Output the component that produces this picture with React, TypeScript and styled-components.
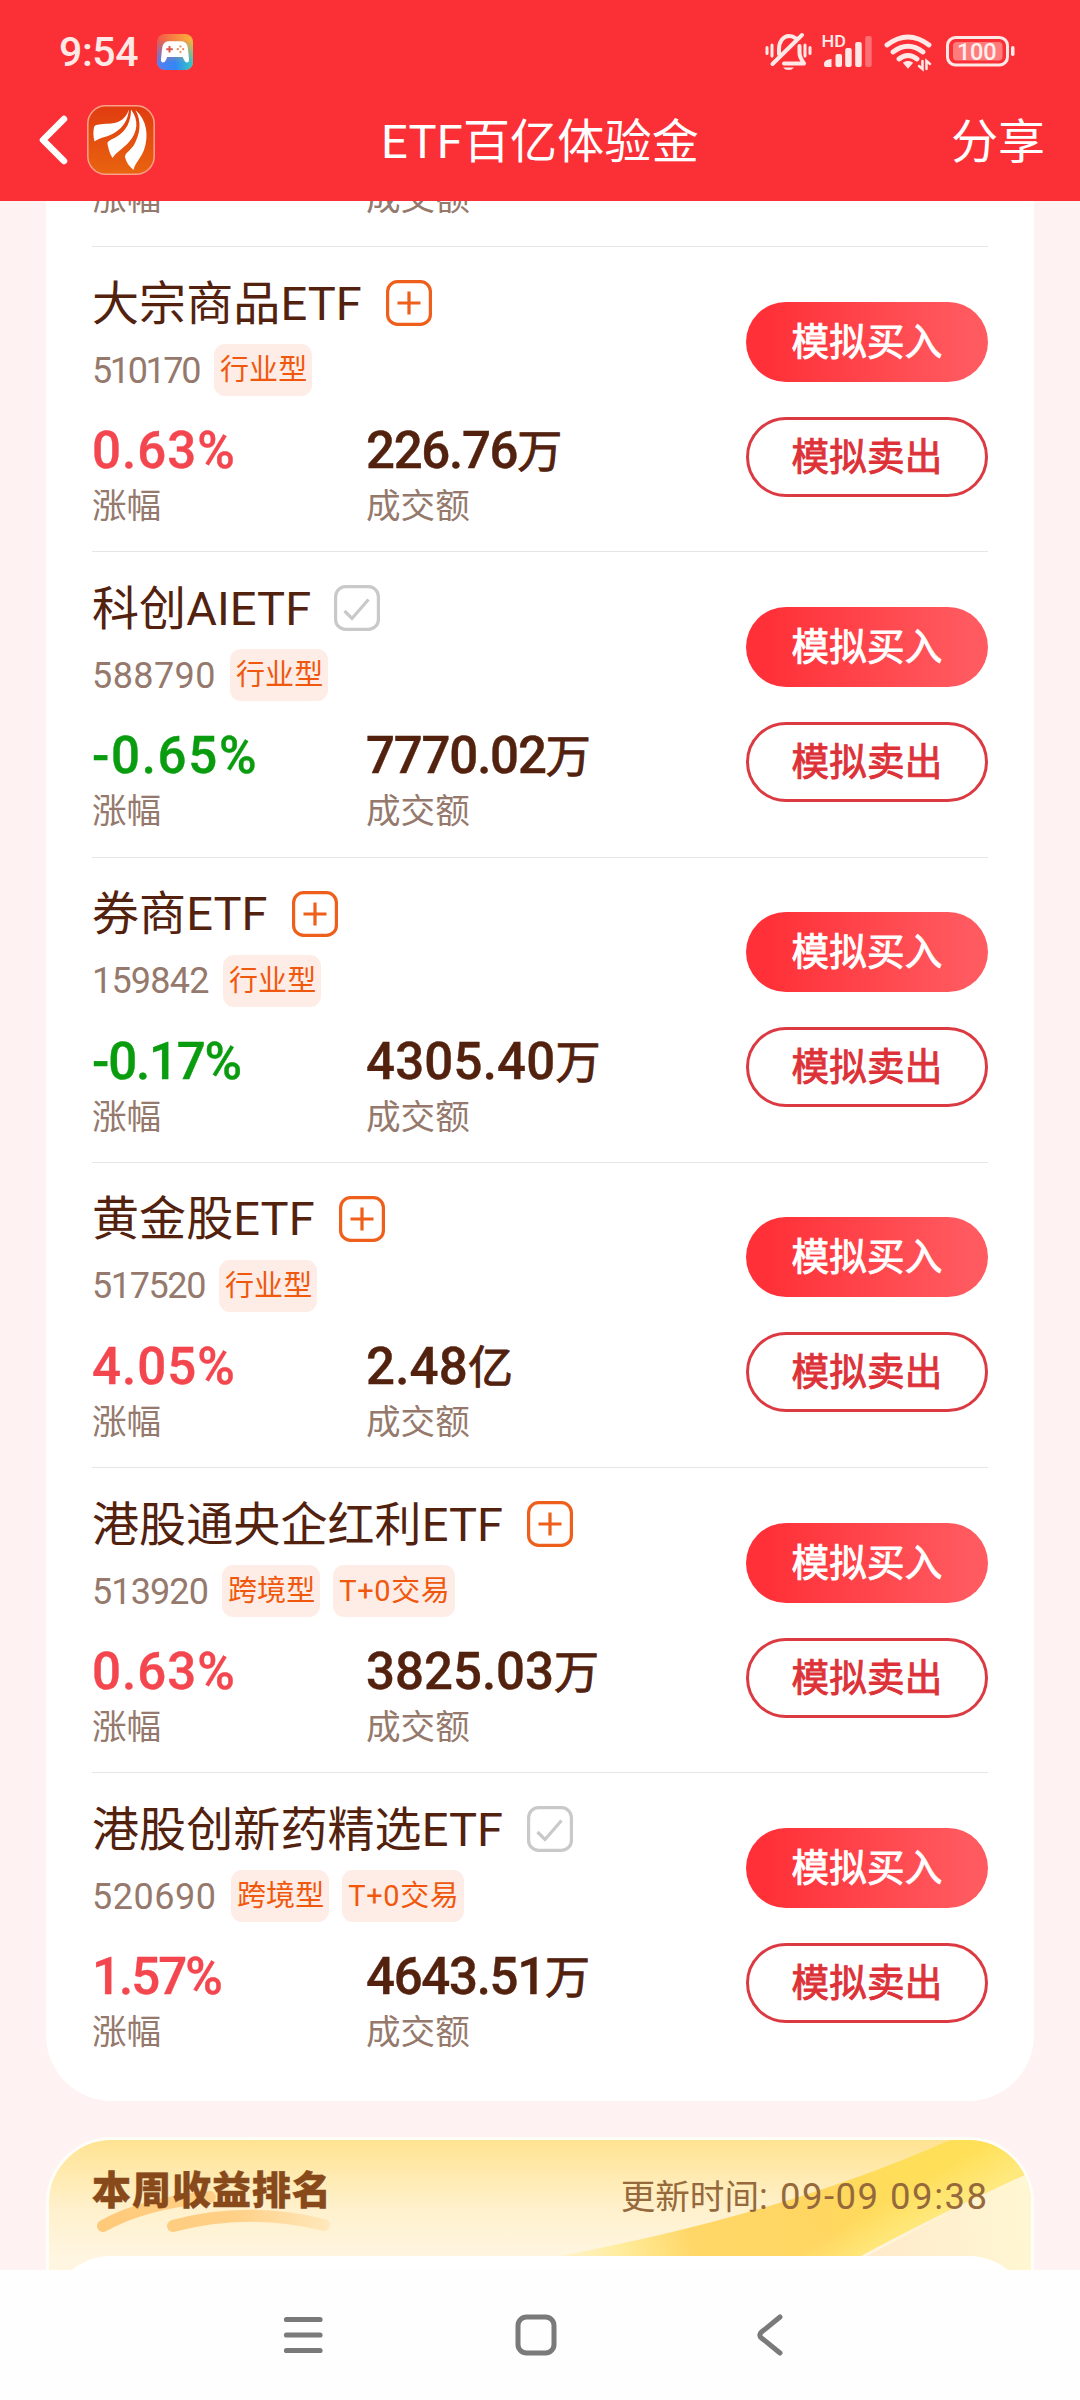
import React from 'react';
import styled, { createGlobalStyle } from 'styled-components';

const Global = createGlobalStyle`
  * { box-sizing: border-box; }
  body { margin: 0; background: #fef2f2; font-family: Roboto, "Noto Sans CJK SC", sans-serif; }
`;

const Screen = styled.div`
  width: 1080px; height: 2400px; overflow: hidden;
  display: flex; flex-direction: column; background: #fef2f2;
`;

const Header = styled.header`
  flex: none; height: 201px; background: #fb3037; color: #fff;
  display: flex; flex-direction: column;
`;
const StatusBar = styled.div`
  height: 104px; padding: 0 65px 0 59px; display: flex; align-items: center;
  color: #ffe9e7;
`;
const Clock = styled.span`
  font-size: 41px; line-height: 48px; font-weight: 500; width: 98px; letter-spacing: -0.4px;
`;
const StatusIcons = styled.div`
  margin-left: auto; display: flex; align-items: center;
`;
const TitleBar = styled.div`
  height: 72px; padding: 0 35px 0 38px; display: grid; align-items: center;
  grid-template-columns: 1fr auto 1fr;
`;
const HeaderLeft = styled.div`display: flex; align-items: center; gap: 18px;`;
const PageTitle = styled.h1`
  margin: 0; font-size: 47px; line-height: 60px; font-weight: 400; padding: 3px 3px 0 0; letter-spacing: 0.2px;
`;
const Share = styled.span`justify-self: end; font-size: 47px; line-height: 60px; padding-top: 3px;`;

const Content = styled.main`
  flex: 1; min-height: 0; overflow: hidden; padding: 0 46px;
  display: flex; flex-direction: column; gap: 36px;
`;
const ListCard = styled.section`
  flex: none; height: 1900px; background: #fff; border-radius: 0 0 66px 66px; padding: 0 46px;
  display: flex; flex-direction: column;
`;
const ClippedRow = styled.div`
  flex: none; height: 45px; overflow: hidden; display: flex; align-items: flex-end; padding-bottom: 23px;
`;
const Row = styled.article`
  flex: none; height: 305.3px; border-top: 1.5px solid #e6e6e6; display: flex; justify-content: space-between;
`;
const Info = styled.div`display: flex; flex-direction: column; padding-top: 26px;`;
const NameLine = styled.div`display: flex; align-items: center; height: 60px;`;
const Name = styled.h2<{ $w: number }>`
  margin: 0; width: ${p => p.$w}px; white-space: nowrap; padding-top: 1px;
  font-size: 47px; line-height: 60px; font-weight: 400; color: #53220f; letter-spacing: 0.1px;
`;
const CodeLine = styled.div`
  display: flex; align-items: center; height: 52px; margin-top: 11px; gap: 13px;
`;
const Code = styled.span<{ $w: number; $ls: number }>`
  width: ${p => p.$w}px; letter-spacing: ${p => p.$ls}px; white-space: nowrap;
  font-size: 36px; line-height: 52px; color: #95796c; padding-top: 1px;
`;
const Tag = styled.span<{ $ls: number }>`
  height: 52px; padding: 0 5px 0 6px; border-radius: 11px; background: #feede6; color: #f0580e;
  font-size: 29px; line-height: 53px; white-space: nowrap; letter-spacing: ${p => p.$ls}px;
`;
const Stats = styled.div`display: flex; margin-top: 25px;`;
const Stat = styled.div<{ $w?: number }>`
  width: ${p => (p.$w ? p.$w + 'px' : 'auto')}; display: flex; flex-direction: column;
`;
const Value = styled.span<{ $c: string; $ls: number }>`
  font-size: 51px; line-height: 60px; height: 60px; font-weight: 500; color: ${p => p.$c}; white-space: nowrap;
  letter-spacing: ${p => p.$ls}px; -webkit-text-stroke: 0.4px currentColor;
`;
const Unit = styled.span`
  font-size: 45px; font-weight: 400; letter-spacing: 0; -webkit-text-stroke: 0.9px currentColor;
`;
const Label = styled.span`
  font-size: 34.6px; line-height: 50px; color: #95796c; white-space: nowrap;
`;
const Actions = styled.div`
  display: flex; flex-direction: column; gap: 35px; padding-top: 54.5px;
`;
const Button = styled.button<{ $outline?: boolean }>`
  width: 242px; height: 80px; border-radius: 40px; padding: 0;
  font: 400 37.6px/56px Roboto, "Noto Sans CJK SC", sans-serif; letter-spacing: 0.2px;
  border: ${p => (p.$outline ? '3px solid #dc3a42' : '0')};
  color: ${p => (p.$outline ? '#dc3238' : '#fff')};
  background: ${p => (p.$outline ? '#fff' : 'linear-gradient(90deg, #ff3037 8%, #ff5a60 92%)')};
  -webkit-text-stroke: 0.9px currentColor;
`;

const RankCard = styled.section`
  flex: none; height: 260px; border: 3px solid #fffdf8; border-radius: 66px; overflow: hidden;
  display: grid; grid-template-rows: 116px 1fr;
  background: linear-gradient(180deg, #ffe392 0, #fff1cd 70px, #fff6e2 120px);
`;
const RankHead = styled.div`
  grid-area: 1 / 1; display: flex; justify-content: space-between; padding: 0 44px 0 43px; z-index: 1;
`;
const Ribbon = styled.svg`grid-area: 1 / 1 / 3 / 2; display: block;`;
const RankTitle = styled.div`display: grid; padding-top: 22px; align-content: start;`;
const RankText = styled.h2`
  grid-area: 1 / 1; margin: 0; z-index: 1; font-size: 39px; line-height: 58px; font-weight: 900; color: #88491b;
  letter-spacing: 1px; -webkit-text-stroke: 0.4px currentColor; white-space: nowrap;
`;
const Swoosh = styled.svg`grid-area: 1 / 1; margin-top: 27px;`;
const Updated = styled.span`
  padding-top: 31.5px; font-size: 34.6px; line-height: 50px; color: #96693c; white-space: nowrap;
`;
const Stamp = styled.span`font-size: 36.5px; letter-spacing: 1.5px; margin-right: -1.5px;`;
const RankBody = styled.div`grid-area: 2 / 1; background: #fff; border-radius: 62px; z-index: 1;`;

const NavBar = styled.nav`
  flex: none; height: 130px; background: #fefefe; display: grid; align-items: center;
  grid-template-columns: 233px 240px 30px; padding-left: 282px;
`;

const AddIcon = () => (
  <svg width="46" height="46" viewBox="0 0 46 46" fill="none" stroke="#ef5f1c" strokeWidth="3.200">
    <rect x="1.6" y="1.6" width="42.8" height="42.8" rx="10" />
    <path d="M11.5 23h23M23 11.5v23" />
  </svg>
);
const CheckedIcon = () => (
  <svg width="46" height="46" viewBox="0 0 46 46" fill="none" stroke="#c9c9c9" strokeWidth="3.200">
    <rect x="1.6" y="1.6" width="42.8" height="42.8" rx="10" />
    <path d="M10.5 26l7.5 7.5L34.5 14.5" />
  </svg>
);

const GameIcon = () => (
  <svg width="36" height="36" viewBox="0 0 36 36">
    <defs>
      <linearGradient id="gameTop" x1="0" y1="0" x2="1" y2="0">
        <stop offset="0" stopColor="#f0574a" /><stop offset="1" stopColor="#fdb43a" />
      </linearGradient>
      <linearGradient id="gameBottom" x1="0" y1="0" x2="1" y2="0">
        <stop offset="0" stopColor="#5a7df0" /><stop offset=".5" stopColor="#3287f5" /><stop offset="1" stopColor="#35c9c0" />
      </linearGradient>
      <linearGradient id="gameFade" x1="0" y1="0" x2="0" y2="1">
        <stop offset=".15" stopColor="#000" /><stop offset=".8" stopColor="#fff" />
      </linearGradient>
      <mask id="gameMask"><rect width="36" height="36" fill="url(#gameFade)" /></mask>
    </defs>
    <rect width="36" height="36" rx="8" fill="url(#gameTop)" />
    <rect width="36" height="36" rx="8" fill="url(#gameBottom)" mask="url(#gameMask)" />
    <path d="M8 8.5q2-1.6 5-1.2h10q3-.4 5 1.2 2.500 1.500 3 7l1 9.500q.2 3.500-2 3.500-2 0-3.200-3l-1-2.500H10.200l-1 2.500q-1.200 3-3.200 3-2.200 0-2-3.500l1-9.500q.5-5.500 3-7z" fill="#fff" />
    <path d="M12.500 12v6.500M9.300 15.200h6.500" stroke="#e0584c" strokeWidth="2" />
    <g fill="#f0864a"><circle cx="23.500" cy="12.500" r="1.100" /><circle cx="23.500" cy="18" r="1.100" /><circle cx="20.800" cy="15.200" r="1.100" /><circle cx="26.200" cy="15.200" r="1.100" /></g>
  </svg>
);

const BackIcon = () => (
  <svg width="31" height="52" viewBox="0 0 31 52" fill="none" stroke="#fff" strokeWidth="6.500" strokeLinecap="round" strokeLinejoin="round">
    <path d="M26 5L5 26l21 21" />
  </svg>
);
const Logo = () => (
  <svg width="68" height="70" viewBox="0 0 68 70">
    <defs>
      <linearGradient id="logo" x1="0" y1="0" x2="0" y2="1">
        <stop offset="0" stopColor="#e03c10" /><stop offset="1" stopColor="#e8640f" />
      </linearGradient>
    </defs>
    <rect x=".8" y=".8" width="66.400" height="68.400" rx="18" fill="url(#logo)" stroke="#fba08a" strokeWidth="1.500" />
    <g fill="#fff">
      <path d="M42 4.500C39 13 33 18 24 18.500 16 19 11 19 7.500 21 6 25 6 31 7.500 36.500 14 32 21 32 28 27.500 37 22 41 14 42 4.500z" />
      <path d="M44 4.500C44 17 39 26 30 31.500 24 35 20 36 20.500 39 21.500 44 22.500 48 25.500 53 29 47 36 44 42 37 51 27 52 15 44 4.500z" />
      <path d="M48.500 5C55 17 53 29 47 40 43 46 38 48 38 52 39 57 42 61 46.500 65 48 58 54 53 57 45 62 31 60 15 48.500 5z" />
    </g>
  </svg>
);

const StatusGlyphs = () => (
  <svg width="250" height="40" viewBox="765 33 250 40" fill="none" stroke="#ffe9e7" strokeLinecap="round">
    <g strokeWidth="3">
      <path d="M767 48.500v6M772 46v11M805 46v11M810 48.500v6" />
      <path d="M779 55V50c0-7 4-13 10-13 3 0 5 .8 7 2.500M799.500 47v7c0 4 2 7 4.500 10.500H784" strokeWidth="4" strokeLinejoin="round" />
      <path d="M802 36L772.500 65" strokeWidth="4" />
      <path d="M783 68.500h11q-2 2.500-5.500 2.500t-5.500-2.500z" fill="#ffe9e7" stroke="none" />
    </g>
    <text x="821.500" y="48" fontFamily="Roboto, sans-serif" fontSize="16.500" fontWeight="500" fill="#ffe9e7" stroke="none" textLength="24.500" lengthAdjust="spacingAndGlyphs">HD</text>
    <g fill="#ffe9e7" stroke="none">
      <path d="M824 66v-2q1-3.500 7.500-4v8h-5.500q-2 0-2-2z" />
      <rect x="835.500" y="55" width="6.500" height="13" rx="2" />
      <rect x="845.200" y="49" width="6.500" height="19" rx="2" />
      <rect x="855.200" y="43" width="6.500" height="25" rx="2" />
      <rect x="865.200" y="37" width="6.500" height="31" rx="2" opacity=".35" />
    </g>
    <g strokeWidth="4.800">
      <path d="M887 46q21-16 42 0M893 53q15-11.500 30 0M899 60q9-7 18 0" />
      <path d="M904 64q4-2.500 8 0l-4 4.500z" fill="#ffe9e7" stroke="#ffe9e7" strokeWidth="1.500" />
      <path d="M922.500 62v8l-3.500-3M926.500 70v-8l3.500 3" strokeWidth="2.500" />
    </g>
    <rect x="947.500" y="38.500" width="60" height="27.500" rx="8" strokeWidth="3" />
    <rect x="953" y="43" width="49.500" height="18.500" rx="4" fill="#ff7c7d" stroke="none" />
    <rect x="1011" y="47" width="3.500" height="10" rx="1.700" fill="#ffe9e7" stroke="none" />
    <text x="957" y="61" fontFamily="Roboto, sans-serif" fontSize="23.500" fontWeight="500" fill="#fff0ee" stroke="none" textLength="39.500">100</text>
  </svg>
);

type Etf = {
  name: string; nameW: number; added?: boolean; code: string; codeW: number; ls: number;
  tags: string[]; change: string; changeLs: number; amount: string; unit: string; amountLs: number;
};
const etfs: Etf[] = [
  { name: '大宗商品ETF', nameW: 294, code: '510170', codeW: 109, ls: -2.4, tags: ['行业型'], change: '0.63%', changeLs: 1, amount: '226.76', unit: '万', amountLs: -1.3 },
  { name: '科创AIETF', nameW: 242, added: true, code: '588790', codeW: 125, ls: 0.4, tags: ['行业型'], change: '-0.65%', changeLs: 1.7, amount: '7770.02', unit: '万', amountLs: -1.2 },
  { name: '券商ETF', nameW: 200, code: '159842', codeW: 118, ls: -0.8, tags: ['行业型'], change: '-0.17%', changeLs: -1.2, amount: '4305.40', unit: '万', amountLs: 0.2 },
  { name: '黄金股ETF', nameW: 247, code: '517520', codeW: 114, ls: -1.4, tags: ['行业型'], change: '4.05%', changeLs: 1, amount: '2.48', unit: '亿', amountLs: 0.2 },
  { name: '港股通央企红利ETF', nameW: 435, code: '513920', codeW: 117, ls: -0.9, tags: ['跨境型', 'T+0交易'], change: '0.63%', changeLs: 1, amount: '3825.03', unit: '万', amountLs: 0 },
  { name: '港股创新药精选ETF', nameW: 435, added: true, code: '520690', codeW: 126, ls: 0.5, tags: ['跨境型', 'T+0交易'], change: '1.57%', changeLs: -2, amount: '4643.51', unit: '万', amountLs: -1.3 },
];

const EtfRow = ({ e }: { e: Etf }) => (
  <Row>
    <Info>
      <NameLine><Name $w={e.nameW}>{e.name}</Name>{e.added ? <CheckedIcon /> : <AddIcon />}</NameLine>
      <CodeLine>
        <Code $w={e.codeW} $ls={e.ls}>{e.code}</Code>
        {e.tags.map(t => <Tag key={t} $ls={t.length > 3 ? 0.6 : 0.1}>{t}</Tag>)}
      </CodeLine>
      <Stats>
        <Stat $w={274}>
          <Value $c={e.change.startsWith('-') ? '#0a9c0f' : '#f3464e'} $ls={e.changeLs}>{e.change}</Value>
          <Label>涨幅</Label>
        </Stat>
        <Stat>
          <Value $c="#53220f" $ls={e.amountLs}>{e.amount}<Unit>{e.unit}</Unit></Value>
          <Label>成交额</Label>
        </Stat>
      </Stats>
    </Info>
    <Actions>
      <Button>模拟买入</Button>
      <Button $outline>模拟卖出</Button>
    </Actions>
  </Row>
);

export default function App() {
  return (
    <Screen>
      <Global />
      <Header>
        <StatusBar>
          <Clock>9:54</Clock>
          <GameIcon />
          <StatusIcons><StatusGlyphs /></StatusIcons>
        </StatusBar>
        <TitleBar>
          <HeaderLeft><BackIcon /><Logo /></HeaderLeft>
          <PageTitle>ETF百亿体验金</PageTitle>
          <Share>分享</Share>
        </TitleBar>
      </Header>
      <Content>
        <ListCard>
          <ClippedRow>
            <Stat $w={274}><Label>涨幅</Label></Stat>
            <Label>成交额</Label>
          </ClippedRow>
          {etfs.map(e => <EtfRow key={e.code} e={e} />)}
        </ListCard>
        <RankCard>
          <Ribbon width="982" height="254" viewBox="0 0 982 254">
            <defs>
              <linearGradient id="band" x1="510" y1="120" x2="940" y2="10" gradientUnits="userSpaceOnUse">
                <stop offset="0" stopColor="#fff3cf" /><stop offset=".14" stopColor="#ffec9c" />
                <stop offset=".3" stopColor="#ffd768" /><stop offset=".6" stopColor="#ffd660" />
                <stop offset=".78" stopColor="#ffde5a" /><stop offset="1" stopColor="#ffe056" />
              </linearGradient>
              <linearGradient id="edge" x1="838" y1="60" x2="866" y2="108" gradientUnits="userSpaceOnUse">
                <stop offset="0" stopColor="#ffe87c" stopOpacity="0" /><stop offset=".7" stopColor="#ffe87c" />
              </linearGradient>
              <linearGradient id="corner" x1="820" y1="110" x2="982" y2="90" gradientUnits="userSpaceOnUse">
                <stop offset="0" stopColor="#ffeacc" /><stop offset="1" stopColor="#fff7d2" />
              </linearGradient>
            </defs>
            <path d="M810 120L982 30V254H810z" fill="url(#corner)" />
            <path d="M500 118Q730 76 901 0H982V32Q900 68 808 118z" fill="url(#band)" />
            <path d="M700 118L982 -20V32Q900 68 808 118z" fill="url(#edge)" />
          </Ribbon>
          <RankHead>
            <RankTitle>
              <RankText>本周收益排名</RankText>
              <Swoosh width="240" height="44" viewBox="0 0 240 44" fill="none" strokeLinecap="round">
                <defs>
                  <linearGradient id="sw" x1="0" y1="0" x2="240" y2="0" gradientUnits="userSpaceOnUse">
                    <stop offset="0" stopColor="#ffc978" /><stop offset=".6" stopColor="#ffd087" /><stop offset="1" stopColor="#ffe9bd" />
                  </linearGradient>
                </defs>
                <path d="M11 37Q52 14 118 8" stroke="url(#sw)" strokeWidth="12" />
                <path d="M81 37Q155 17 232 36" stroke="url(#sw)" strokeWidth="12" />
              </Swoosh>
            </RankTitle>
            <Updated>更新时间<Stamp>: 09-09 09:38</Stamp></Updated>
          </RankHead>
          <RankBody />
        </RankCard>
      </Content>
      <NavBar>
        <svg width="42" height="42" viewBox="0 0 42 42" stroke="#7a7a7a" strokeWidth="5.200" strokeLinecap="round">
          <path d="M4.500 5.500h33.500M4.500 21h33.500M4.500 36.500h33.500" />
        </svg>
        <svg width="42" height="42" viewBox="0 0 42 42" fill="none" stroke="#7a7a7a" strokeWidth="5">
          <rect x="3" y="3" width="36" height="36" rx="8.500" />
        </svg>
        <svg width="30" height="42" viewBox="0 0 30 42" fill="none" stroke="#7a7a7a" strokeWidth="5" strokeLinecap="round">
          <path d="M25 3L6.500 18q-3.500 3 0 6L25 39" />
        </svg>
      </NavBar>
    </Screen>
  );
}
